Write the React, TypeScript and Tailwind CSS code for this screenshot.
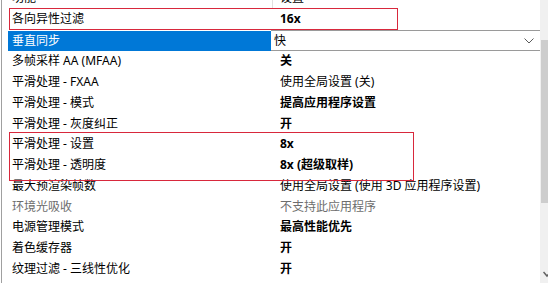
import React from "react";

type Row = { name: string; value: string; bold?: boolean; gray?: boolean };

const rows: Row[] = [
  { name: "多帧采样 AA (MFAA)", value: "关", bold: true },
  { name: "平滑处理 - FXAA", value: "使用全局设置 (关)" },
  { name: "平滑处理 - 模式", value: "提高应用程序设置", bold: true },
  { name: "平滑处理 - 灰度纠正", value: "开", bold: true },
  { name: "平滑处理 - 设置", value: "8x", bold: true },
  { name: "平滑处理 - 透明度", value: "8x (超级取样)", bold: true },
  { name: "最大预渲染帧数", value: "使用全局设置 (使用 3D 应用程序设置)" },
  { name: "环境光吸收", value: "不支持此应用程序", gray: true },
  { name: "电源管理模式", value: "最高性能优先", bold: true },
  { name: "着色缓存器", value: "开", bold: true },
  { name: "纹理过滤 - 三线性优化", value: "开", bold: true },
];

export default function App() {
  return (
    <div
      className="relative w-[548px] h-[283px] overflow-hidden bg-white flex text-[12px] text-black"
      style={{ fontFamily: '"Noto Sans", "Noto Sans CJK SC", sans-serif' }}
    >
      <div className="w-[1px] shrink-0" />
      <div className="w-[1px] shrink-0 bg-[#a0a0a0]" />
      <div className="flex-1 flex flex-col mt-[-12px]">
        {/* header */}
        <div className="h-[20px] flex items-center shrink-0">
          <div className="w-[270px] pl-[10px] h-full flex items-center">功能</div>
          <div className="w-px h-full bg-[#e0e0e0]" />
          <div className="pl-[7px] flex items-center">设置</div>
        </div>
        {/* row 1 */}
        <div className="h-[22px] flex items-center shrink-0">
          <div className="w-[270px] pl-[10px]">各向异性过滤</div>
          <div className="pl-[8px] font-bold">16x</div>
        </div>
        {/* selected row */}
        <div className="h-[21px] flex shrink-0">
          <div className="w-[263px] ml-[6px] mt-[1px] bg-[#0078d7] text-white pl-[4px] flex items-center">
            垂直同步
          </div>
          <div className="flex-1 border-y border-[#9a9a9a] bg-white flex items-center justify-between pl-[3px] pr-[6px]">
            <span>快</span>
            <svg width="10" height="6" viewBox="0 0 10 6" className="mt-[1px]">
              <path d="M0.5 0.5 L5 5 L9.5 0.5" fill="none" stroke="#5a5a5a" strokeWidth="1" />
            </svg>
          </div>
        </div>
        {rows.map((r) => (
          <div key={r.name} className="h-[20.75px] flex items-center shrink-0">
            <div className={`w-[270px] pl-[10px] ${r.gray ? "text-[#6d6d6d]" : ""}`}>{r.name}</div>
            <div
              className={`pl-[8px] ${r.bold ? "font-bold" : ""} ${r.gray ? "text-[#6d6d6d]" : ""}`}
            >
              {r.value}
            </div>
          </div>
        ))}
      </div>
      {/* scrollbar */}
      <div className="w-[8px] shrink-0 bg-[#f0f0f0] flex flex-col relative">
        <div className="mt-[40px] h-[163px] ml-[1px] bg-[#cdcdcd]" />
        <svg width="8" height="8" viewBox="0 0 8 8" className="absolute left-[3px] top-[271px]">
          <path d="M0.5 1 L4 5 L7.5 1" fill="none" stroke="#606060" strokeWidth="1.5" />
        </svg>
      </div>
      {/* annotation boxes */}
      <div className="absolute left-[9px] top-[8px] w-[389px] h-[22px] border border-[#d8283c] pointer-events-none" />
      <div className="absolute left-[9px] top-[132px] w-[405px] h-[49px] border border-[#d8283c] pointer-events-none" />
    </div>
  );
}
